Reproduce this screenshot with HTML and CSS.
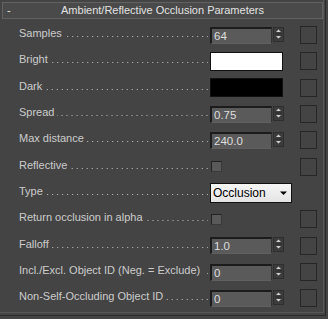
FILE: index.html
```html
<!DOCTYPE html>
<html>
<head>
<meta charset="utf-8">
<link rel="stylesheet" href="styles.css">
</head>
<body>
<div class="frame">
  <div class="rollout">
    <div class="title"><span class="minus">-</span><span class="title-text">Ambient/Reflective Occlusion Parameters</span></div>
    <div class="rows">
      <div class="row">
        <div class="label"><span class="txt">Samples</span><span class="dots"></span></div>
        <div class="ctrl"><div class="spin"><div class="field">64</div><div class="arrows"><svg width="11" height="15" viewBox="0 0 11 15"><path d="M3 5 L5.5 2.5 L8 5 Z M3 9 L5.5 11.5 L8 9 Z" fill="#d0d0d0"/><path d="M2 7 H9" stroke="#2a2a2a" stroke-width="1"/></svg></div></div></div>
        <div class="sq"></div>
      </div>
      <div class="row">
        <div class="label"><span class="txt">Bright</span><span class="dots"></span></div>
        <div class="ctrl"><div class="swatch white"></div></div>
        <div class="sq"></div>
      </div>
      <div class="row">
        <div class="label"><span class="txt">Dark</span><span class="dots"></span></div>
        <div class="ctrl"><div class="swatch black"></div></div>
        <div class="sq"></div>
      </div>
      <div class="row">
        <div class="label"><span class="txt">Spread</span><span class="dots"></span></div>
        <div class="ctrl"><div class="spin"><div class="field">0.75</div><div class="arrows"><svg width="11" height="15" viewBox="0 0 11 15"><path d="M3 5 L5.5 2.5 L8 5 Z M3 9 L5.5 11.5 L8 9 Z" fill="#d0d0d0"/><path d="M2 7 H9" stroke="#2a2a2a" stroke-width="1"/></svg></div></div></div>
        <div class="sq"></div>
      </div>
      <div class="row">
        <div class="label"><span class="txt">Max distance</span><span class="dots"></span></div>
        <div class="ctrl"><div class="spin"><div class="field">240.0</div><div class="arrows"><svg width="11" height="15" viewBox="0 0 11 15"><path d="M3 5 L5.5 2.5 L8 5 Z M3 9 L5.5 11.5 L8 9 Z" fill="#d0d0d0"/><path d="M2 7 H9" stroke="#2a2a2a" stroke-width="1"/></svg></div></div></div>
        <div class="sq"></div>
      </div>
      <div class="row">
        <div class="label"><span class="txt">Reflective</span><span class="dots"></span></div>
        <div class="ctrl"><div class="check"></div></div>
        <div class="sq"></div>
      </div>
      <div class="row">
        <div class="label"><span class="txt">Type</span><span class="dots"></span></div>
        <div class="ctrl"><div class="select"><span>Occlusion</span><svg width="8" height="5" viewBox="0 0 8 5"><path d="M0 0.5 H7 L3.5 4 Z" fill="#000"/></svg></div></div>
        <div class="sq empty"></div>
      </div>
      <div class="row">
        <div class="label"><span class="txt">Return occlusion in alpha</span><span class="dots"></span></div>
        <div class="ctrl"><div class="check"></div></div>
        <div class="sq"></div>
      </div>
      <div class="row">
        <div class="label"><span class="txt">Falloff</span><span class="dots"></span></div>
        <div class="ctrl"><div class="spin"><div class="field">1.0</div><div class="arrows"><svg width="11" height="15" viewBox="0 0 11 15"><path d="M3 5 L5.5 2.5 L8 5 Z M3 9 L5.5 11.5 L8 9 Z" fill="#d0d0d0"/><path d="M2 7 H9" stroke="#2a2a2a" stroke-width="1"/></svg></div></div></div>
        <div class="sq"></div>
      </div>
      <div class="row">
        <div class="label"><span class="txt">Incl./Excl. Object ID (Neg. = Exclude)</span><span class="dots"></span></div>
        <div class="ctrl"><div class="spin"><div class="field">0</div><div class="arrows"><svg width="11" height="15" viewBox="0 0 11 15"><path d="M3 5 L5.5 2.5 L8 5 Z M3 9 L5.5 11.5 L8 9 Z" fill="#d0d0d0"/><path d="M2 7 H9" stroke="#2a2a2a" stroke-width="1"/></svg></div></div></div>
        <div class="sq"></div>
      </div>
      <div class="row">
        <div class="label"><span class="txt">Non-Self-Occluding Object ID</span><span class="dots"></span></div>
        <div class="ctrl"><div class="spin"><div class="field">0</div><div class="arrows"><svg width="11" height="15" viewBox="0 0 11 15"><path d="M3 5 L5.5 2.5 L8 5 Z M3 9 L5.5 11.5 L8 9 Z" fill="#d0d0d0"/><path d="M2 7 H9" stroke="#2a2a2a" stroke-width="1"/></svg></div></div></div>
        <div class="sq"></div>
      </div>
    </div>
  </div>
</div>
</body>
</html>
```

FILE: styles.css
```css
html, body {
  margin: 0;
  padding: 0;
  background: #444444;
}
body {
  width: 328px;
  height: 319px;
  overflow: hidden;
  font-family: "Liberation Sans", Arial, sans-serif;
  font-size: 11px;
  color: #cccccc;
}
.frame {
  width: 326px;
  height: 316px;
  border-right: 1px solid #2b2b2b;
  border-bottom: 1px solid #2b2b2b;
  box-sizing: border-box;
  background: #444444;
}
.rollout {
  width: 324px;
  height: 313px;
  border-right: 1px solid #575757;
  border-bottom: 1px solid #575757;
  box-sizing: border-box;
  padding-top: 2px;
}
.title {
  margin-left: 2px;
  width: 321px;
  height: 17px;
  box-sizing: border-box;
  border: 1px solid #626262;
  background: #4a4a4a;
  display: flex;
  align-items: center;
  position: relative;
  color: #e2e2e2;
  line-height: 15px;
}
.minus {
  position: absolute;
  left: 4px;
  top: 0;
  color: #e8e8e8;
}
.title-text {
  flex: 1;
  text-align: center;
}
.rows {
  padding-top: 3px;
  display: grid;
  grid-auto-rows: 26.33px;
}
.row {
  display: flex;
  align-items: center;
  padding-left: 19px;
}
.label {
  width: 191px;
  flex: none;
  display: flex;
  align-items: flex-end;
  height: 13px;
  line-height: 13px;
  margin-bottom: 3px;
  white-space: nowrap;
}
.txt {
  flex: none;
}
.dots {
  flex: 1;
  height: 1px;
  margin: 0 2px 3px 3px;
  background-image: linear-gradient(to right, transparent 4px, #c4c4c4 4px);
  background-size: 5px 1px;
  background-repeat: repeat-x;
  background-position: right bottom;
}
.ctrl {
  width: 90px;
  flex: none;
  display: flex;
  align-items: center;
}
.spin {
  display: flex;
  align-items: center;
  gap: 1px;
}
.field {
  width: 62px;
  height: 17px;
  box-sizing: border-box;
  background: #5a5a5a;
  border-top: 2px solid #1c1c1c;
  border-left: 2px solid #1c1c1c;
  border-right: 1px solid #333333;
  border-bottom: 1px solid #606060;
  color: #dedede;
  padding-left: 2px;
  line-height: 14px;
  font-size: 11.5px;
}
.arrows {
  width: 11px;
  height: 15px;
  box-sizing: border-box;
  background: #3c3c3c;
  border: 1px solid #2e2e2e;
  display: flex;
  align-items: center;
  justify-content: center;
  margin-top: -2px;
}
.arrows svg {
  display: block;
  flex: none;
}
.swatch {
  width: 73px;
  height: 19px;
  box-sizing: border-box;
  border: 1px solid #111111;
}
.swatch.white { background: #ffffff; }
.swatch.black { background: #000000; }
.check {
  width: 11px;
  height: 11px;
  margin-left: 1px;
  box-sizing: border-box;
  background: #595959;
  border-top: 1px solid #222222;
  border-left: 1px solid #222222;
  border-right: 1px solid #3a3a3a;
  border-bottom: 1px solid #3a3a3a;
}
.select {
  width: 82px;
  height: 20px;
  box-sizing: border-box;
  border: 1px solid #111111;
  background: linear-gradient(#f6f6f6, #e4e4e4);
  color: #000000;
  display: flex;
  align-items: center;
  justify-content: space-between;
  padding: 0 3px 0 2px;
  font-size: 12px;
}
.select svg {
  display: block;
}
.sq {
  width: 17px;
  height: 18px;
  box-sizing: border-box;
  border: 1px solid #262626;
  flex: none;
}
.sq.empty {
  border-color: transparent;
}
```
